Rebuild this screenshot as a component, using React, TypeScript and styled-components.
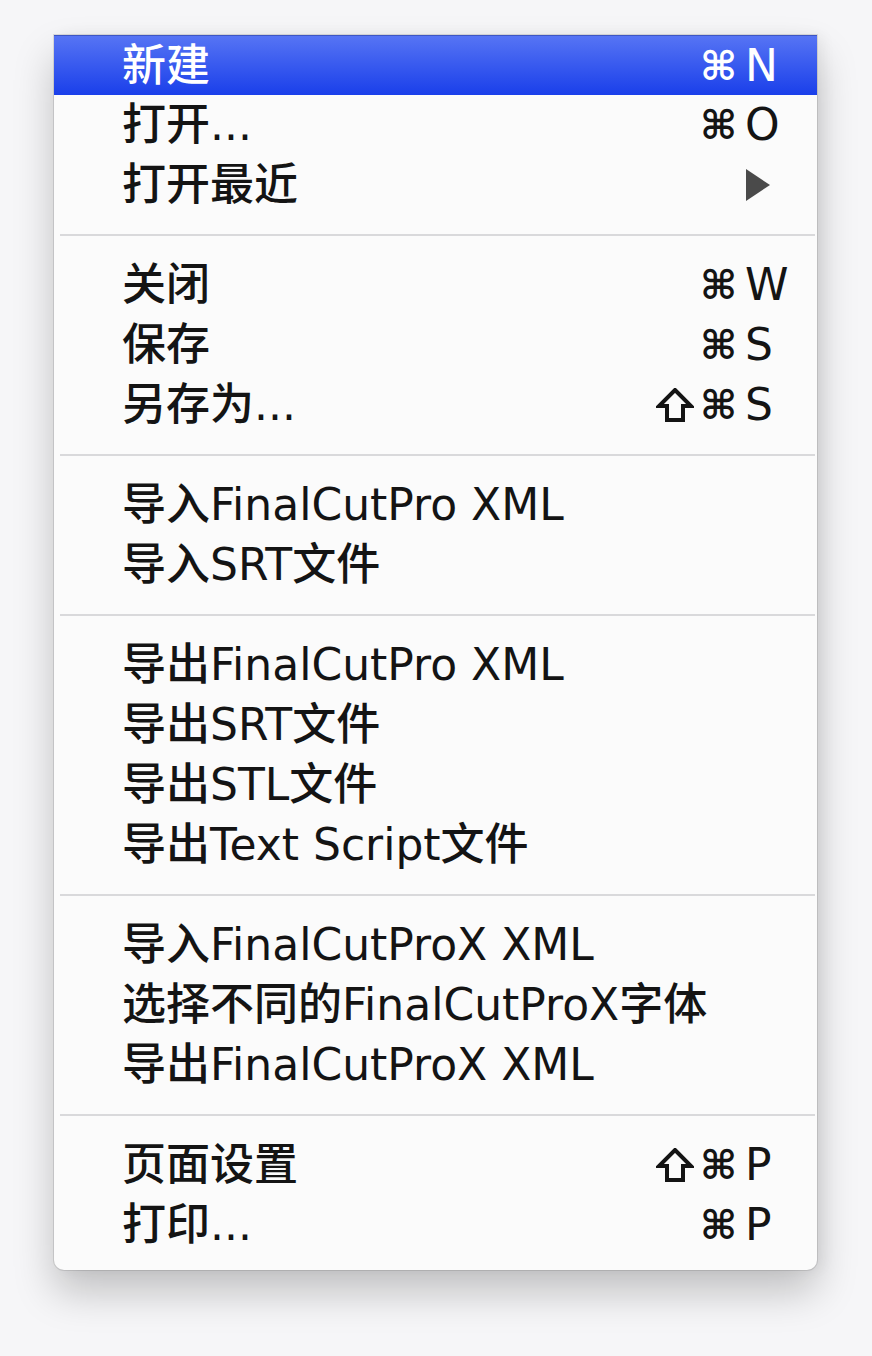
import React from 'react'
import styled, { createGlobalStyle } from 'styled-components'

type Entry =
    | { kind: 'item'; label: string; mods?: string[]; keyChar?: string; submenu?: boolean; active?: boolean }
    | { kind: 'sep' }

const entries: Entry[] = [
    { kind: 'item', label: '新建', mods: ['cmd'], keyChar: 'N', active: true },
    { kind: 'item', label: '打开...', mods: ['cmd'], keyChar: 'O' },
    { kind: 'item', label: '打开最近', submenu: true },
    { kind: 'sep' },
    { kind: 'item', label: '关闭', mods: ['cmd'], keyChar: 'W' },
    { kind: 'item', label: '保存', mods: ['cmd'], keyChar: 'S' },
    { kind: 'item', label: '另存为...', mods: ['shift', 'cmd'], keyChar: 'S' },
    { kind: 'sep' },
    { kind: 'item', label: '导入FinalCutPro XML' },
    { kind: 'item', label: '导入SRT文件' },
    { kind: 'sep' },
    { kind: 'item', label: '导出FinalCutPro XML' },
    { kind: 'item', label: '导出SRT文件' },
    { kind: 'item', label: '导出STL文件' },
    { kind: 'item', label: '导出Text Script文件' },
    { kind: 'sep' },
    { kind: 'item', label: '导入FinalCutProX XML' },
    { kind: 'item', label: '选择不同的FinalCutProX字体' },
    { kind: 'item', label: '导出FinalCutProX XML' },
    { kind: 'sep' },
    { kind: 'item', label: '页面设置', mods: ['shift', 'cmd'], keyChar: 'P' },
    { kind: 'item', label: '打印...', mods: ['cmd'], keyChar: 'P' },
]

// shift key arrow, drawn as an outline like the mac menu glyph
const ShiftIcon = () => (
    <svg width="38" height="34" viewBox="0 0 38 34">
        <path
            d="M19 2 L35 18 L27 18 L27 32 L11 32 L11 18 L3 18 Z"
            fill="none"
            stroke="currentColor"
            strokeWidth="4"
            strokeLinejoin="miter"
        />
    </svg>
)

const App = () => (
    <>
        <GlobalStyle />
        <Page>
            <Menu>
                {entries.map((e, i) =>
                    e.kind === 'sep' ? (
                        <Separator key={i} />
                    ) : (
                        <Item key={i} $active={e.active}>
                            <Label>{e.label}</Label>
                            <Mods>
                                {e.mods?.map(m =>
                                    m === 'shift' ? <ShiftIcon key={m} /> : <Cmd key={m}>⌘</Cmd>
                                )}
                            </Mods>
                            <KeyChar>
                                {e.submenu ? (
                                    <svg width="26" height="32" viewBox="0 0 26 32">
                                        <path d="M1 0 L25 16 L1 32 Z" fill="#4a4a4a" />
                                    </svg>
                                ) : (
                                    e.keyChar
                                )}
                            </KeyChar>
                        </Item>
                    )
                )}
            </Menu>
        </Page>
    </>
)

const GlobalStyle = createGlobalStyle`
    body {
        margin: 0;
        background: #f6f6f8;
        font-family: "DejaVu Sans", "Noto Sans CJK SC", sans-serif;
    }
`

const Page = styled.div`
    width: 872px;
    height: 1356px;
    box-sizing: border-box;
    padding: 35px 55px 0 54px;
`

const Menu = styled.div`
    background: #fbfbfb;
    border-radius: 0 0 10px 10px;
    padding-bottom: 15px;
    box-shadow: 0 0 0 1px rgba(0, 0, 0, 0.1), 0 22px 40px rgba(0, 0, 0, 0.22), 6px 0 14px rgba(0, 0, 0, 0.05);
`

const Item = styled.div<{ $active?: boolean }>`
    height: 60px;
    box-sizing: border-box;
    display: grid;
    grid-template-columns: 1fr 92px 44px;
    column-gap: 8px;
    align-items: center;
    padding: 0 28px 0 68px;
    font-size: 44px;
    color: ${p => (p.$active ? '#ffffff' : '#141414')};
    background: ${p => (p.$active ? 'linear-gradient(#5674f4, #1a3fea)' : 'transparent')};
    border-top: ${p => (p.$active ? '1px solid #3d56c4' : 'none')};
`

const Label = styled.span`
    white-space: nowrap;
    line-height: 1;
    font-weight: 500;
`

const Mods = styled.span`
    display: flex;
    justify-content: flex-end;
    align-items: center;
    gap: 6px;
    line-height: 1;
`

const Cmd = styled.span`
    font-size: 40px;
    font-weight: bold;
`

const KeyChar = styled.span`
    display: flex;
    align-items: center;
    line-height: 1;
`

const Separator = styled.div`
    height: 40px;
    display: flex;
    align-items: center;
    padding: 0 2px 0 6px;

    &::after {
        content: '';
        flex: 1;
        height: 2px;
        background: #d9d9db;
    }
`

export default App
